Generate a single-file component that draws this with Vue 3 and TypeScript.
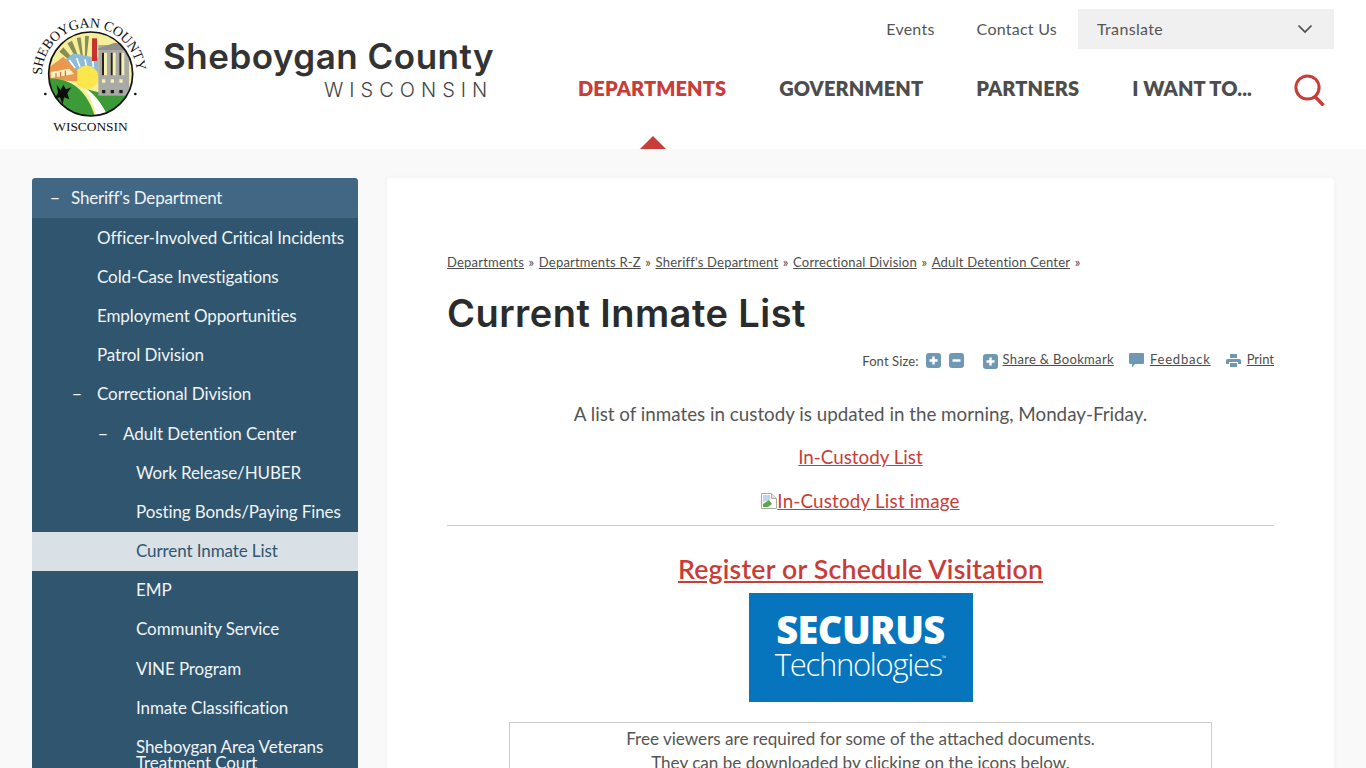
<script setup lang="ts">
const topLinks = ["Events", "Contact Us"];
const mainNav = ["Departments", "Government", "Partners", "I Want To..."];
const crumbs = [
  "Departments",
  "Departments R-Z",
  "Sheriff's Department",
  "Correctional Division",
  "Adult Detention Center",
];
const sideItems = [
  { label: "Officer-Involved Critical Incidents", level: 1 },
  { label: "Cold-Case Investigations", level: 1 },
  { label: "Employment Opportunities", level: 1 },
  { label: "Patrol Division", level: 1 },
  { label: "Correctional Division", level: 1, open: true },
  { label: "Adult Detention Center", level: 2, open: true },
  { label: "Work Release/HUBER", level: 3 },
  { label: "Posting Bonds/Paying Fines", level: 3 },
  { label: "Current Inmate List", level: 3, current: true },
  { label: "EMP", level: 3 },
  { label: "Community Service", level: 3 },
  { label: "VINE Program", level: 3 },
  { label: "Inmate Classification", level: 3 },
  { label: "Sheboygan Area Veterans Treatment Court", level: 3 },
];
</script>

<template>
  <div class="page">
    <header class="header">
      <a class="brand" href="#">
        <svg class="seal" width="116" height="124" viewBox="0 0 116 124">
          <defs>
            <path id="arc" d="M10 65 A47.5 47.5 0 0 1 105 65" />
            <clipPath id="disc"><circle cx="182" cy="192" r="126" /></clipPath>
          </defs>
          <text class="seal-arc"><textPath href="#arc" textLength="145" lengthAdjust="spacing">SHEBOYGAN COUNTY</textPath></text>
          <g transform="translate(-2 0) scale(.3333)">
            <g clip-path="url(#disc)">
              <rect x="50" y="60" width="270" height="270" fill="#f6ef9a" />
              <path d="M165 190 L88 125 L100 112 Z M165 190 L112 100 L126 92 Z M165 190 L140 84 L152 82 Z M165 190 L165 78 L177 78 Z" fill="#8b8d58" />
              <path d="M105 150 L130 130 L205 145 V200 H140 Z" fill="#8dbcd9" />
              <path d="M118 150 L135 175 M140 145 L150 172 M165 148 L170 172 M188 148 L190 172" stroke="#fff" stroke-width="5" />
              <rect x="186" y="85" width="15" height="68" fill="#c8312c" />
              <circle cx="170" cy="202" r="35" fill="#fbe64c" />
              <path d="M52 176 L100 140 L142 184 V214 L52 210 Z" fill="#e8994d" />
              <path d="M62 186 L118 176 L132 192 L64 204 Z" fill="#f8ecc0" />
              <path d="M78 190 V202 M92 186 V200 M106 182 V198" stroke="#a8632a" stroke-width="3" />
              <path d="M50 205 C110 205 165 225 195 320 L50 330 Z" fill="#3c9b37" />
              <path d="M172 238 C195 245 205 250 290 252 L320 240 V330 L228 315 C215 280 195 255 172 238 Z" fill="#3c9b37" />
              <path d="M160 234 C190 250 215 280 232 315 L200 325 C195 290 180 255 160 234 Z" fill="#fff" />
              <path d="M80 225 L92 240 L100 225 L108 238 L124 232 L112 250 L118 268 L102 262 L98 284 L90 262 L74 266 L84 248 Z" fill="#0d0d0d" />
              <rect x="205" y="105" width="92" height="152" fill="#a9aaa5" />
              <path d="M205 115 L255 98 L297 110 V120 H205 Z" fill="#8f908b" />
              <path d="M216 128 H231 V196 H216 Z M242 128 H257 V196 H242 Z M268 128 H283 V196 H268 Z" fill="#f6efb0" />
              <path d="M216 128 H222 V196 H216 Z M242 128 H248 V196 H242 Z M268 128 H274 V196 H268 Z" fill="#232323" />
              <path d="M216 208 H226 V218 H216 Z M242 208 H252 V218 H242 Z M268 208 H278 V218 H268 Z" fill="#f6efb0" />
              <path d="M216 240 H226 V250 H216 Z M242 240 H252 V250 H242 Z M268 240 H278 V250 H268 Z" fill="#1c1c1c" />
            </g>
            <circle cx="182" cy="192" r="126" fill="none" stroke="#111" stroke-width="5" />
            <circle cx="46" cy="252" r="4" fill="#111" />
            <circle cx="316" cy="252" r="4" fill="#111" />
          </g>
          <text class="seal-bottom" x="58.5" y="120.5" text-anchor="middle">WISCONSIN</text>
        </svg>
        <span class="brand-text">
          <span class="brand-name">Sheboygan County</span>
          <span class="brand-state">WISCONSIN</span>
        </span>
      </a>
      <div class="nav-area">
        <div class="top-row">
          <a v-for="link in topLinks" :key="link" class="top-link" href="#">{{ link }}</a>
          <div class="translate">
            <span class="translate-label">Translate</span>
            <svg width="16" height="10" viewBox="0 0 16 10"><path d="M1.5 1.5 L8 8 L14.5 1.5" fill="none" stroke="#4c4c4c" stroke-width="1.7" /></svg>
          </div>
        </div>
        <nav class="main-row">
          <a
            v-for="(item, i) in mainNav"
            :key="item"
            class="main-link"
            :class="{ active: i === 0 }"
            href="#"
          >{{ item }}</a>
          <svg class="search" width="32" height="32" viewBox="0 0 32 32">
            <circle cx="13.5" cy="13.5" r="11.6" fill="none" stroke="#c93c37" stroke-width="3" />
            <path d="M20.5 22 L29.5 31.5" fill="none" stroke="#c93c37" stroke-width="3.4" />
          </svg>
        </nav>
      </div>
    </header>

    <main class="layout">
      <aside class="side">
        <div class="side-head"><span class="dash">−</span>Sheriff's Department</div>
        <a
          v-for="item in sideItems"
          :key="item.label"
          class="side-item"
          :class="['lvl' + item.level, { current: item.current }]"
          href="#"
        ><span v-if="item.open" class="dash">−</span><span>{{ item.label }}</span></a>
      </aside>

      <article class="card">
        <div class="crumbs">
          <template v-for="crumb in crumbs" :key="crumb">
            <a href="#">{{ crumb }}</a><span class="sep"> » </span>
          </template>
        </div>
        <h1>Current Inmate List</h1>
        <div class="tools">
          <span class="fs-label">Font Size:</span>
          <span class="tool-btn"><svg width="15" height="15" viewBox="0 0 15 15"><path d="M7.5 3.5 V11.5 M3.5 7.5 H11.5" stroke="#fff" stroke-width="2.4" /></svg></span>
          <span class="tool-btn minus"><svg width="15" height="15" viewBox="0 0 15 15"><path d="M3.5 7.5 H11.5" stroke="#fff" stroke-width="2.4" /></svg></span>
          <span class="tool-btn share"><svg width="15" height="15" viewBox="0 0 15 15"><path d="M7.5 3.5 V11.5 M3.5 7.5 H11.5" stroke="#fff" stroke-width="2.4" /></svg></span>
          <a href="#">Share &amp; Bookmark</a>
          <svg class="tool-icon fb" width="15" height="15" viewBox="0 0 15 15"><path d="M1 0 H14 Q15 0 15 1 V10 Q15 11 14 11 H6 L3 14.5 V11 H1 Q0 11 0 10 V1 Q0 0 1 0 Z" fill="#6f98b4" /></svg>
          <a class="feedback" href="#">Feedback</a>
          <svg class="tool-icon pr" width="15" height="15" viewBox="0 0 15 15"><path d="M4 1 H11 V5 H4 Z M1.5 6 H13.5 Q15 6 15 7.5 V11 H12 V9 H3 V11 H0 V7.5 Q0 6 1.5 6 Z M4 10 H11 V14 H4 Z" fill="#6f98b4" /></svg>
          <a href="#">Print</a>
        </div>

        <p class="lead first">A list of inmates in custody is updated in the morning, Monday-Friday.</p>
        <p class="lead"><a href="#">In-Custody List</a></p>
        <p class="lead image-line">
          <a href="#">
            <svg class="broken" width="16" height="16" viewBox="0 0 16 16">
              <path d="M.5 .5 H10.5 L15.5 5.5 V15.5 H.5 Z" fill="#fff" stroke="#a9a9a9" />
              <path d="M10.5 .5 V5.5 H15.5" fill="#e6e6e6" stroke="#a9a9a9" />
              <path d="M2 2 H9 V7 L2 9 Z" fill="#c3d4ee" />
              <path d="M2 14 L2 11 L8 7 L11 11 L7 14 Z" fill="#5fa64a" />
            </svg>In-Custody List image</a>
        </p>
        <hr />
        <h2><a href="#">Register or Schedule Visitation</a></h2>
        <div class="securus">
          <span class="sec-top">SECURUS</span>
          <span class="sec-bottom">Technologies<sup>™</sup></span>
        </div>
        <div class="viewers">
          Free viewers are required for some of the attached documents.<br />
          They can be downloaded by clicking on the icons below.
        </div>
      </article>
    </main>
  </div>
</template>

<style scoped>
.page {
  height: 768px;
  overflow: hidden;
  background: #f9f9f9;
  font-family: "Lato", "Open Sans", sans-serif;
  color: #4d4d4d;
}

a {
  color: inherit;
}

.header {
  height: 149px;
  background: #fff;
  display: flex;
  justify-content: space-between;
  padding: 0 32px;
  box-sizing: border-box;
}

.brand {
  display: flex;
  text-decoration: none;
  height: 149px;
}

.seal {
  margin-top: 10px;
  overflow: visible;
}

.seal-arc {
  font: 14px "Liberation Serif", serif;
  fill: #111;
}

.seal-bottom {
  font: 13.4px "Liberation Serif", serif;
  fill: #111;
}

.brand-text {
  display: flex;
  flex-direction: column;
  align-items: flex-end;
  margin-left: 15px;
  padding-top: 35px;
}

.brand-name {
  font: 600 35px/42px "Inter", sans-serif;
  letter-spacing: 0.5px;
  color: #333;
  white-space: nowrap;
}

.brand-state {
  font: 300 20px/26px "Inter", sans-serif;
  letter-spacing: 6px;
  color: #444;
  margin-right: 1px;
}

.nav-area {
  width: 756px;
}

.top-row {
  display: flex;
  justify-content: flex-end;
  align-items: center;
  margin-top: 9px;
  height: 40px;
}

.top-link {
  font-size: 16px;
  text-decoration: none;
  margin: 0 42px 2px 0;
  letter-spacing: 0.25px;
  color: #555;
}

.top-link:nth-child(2) {
  margin-right: 21px;
}

.translate {
  width: 256px;
  height: 40px;
  background: #f0f0f0;
  box-sizing: border-box;
  padding: 0 21px 0 19px;
  display: flex;
  align-items: center;
  justify-content: space-between;
  font-size: 16px;
  letter-spacing: 0.35px;
  color: #555;
}

.translate-label {
  margin-bottom: 2px;
}

.main-row {
  display: flex;
  align-items: center;
  height: 40px;
  margin-top: 19px;
}

.main-link {
  font: 800 20px/40px "Lato", sans-serif;
  text-transform: uppercase;
  text-decoration: none;
  color: #4d4d4d;
  margin-right: 53px;
  position: relative;
  white-space: nowrap;
  letter-spacing: 0.1px;
}

.main-link.active {
  color: #c93c37;
}

.main-link.active::after {
  content: "";
  position: absolute;
  left: 50%;
  margin-left: -12px;
  top: 68px;
  border: 13px solid transparent;
  border-top: 0;
  border-bottom: 13px solid #c93c37;
}

.search {
  margin: 4px 0 0 -11px;
}

.layout {
  display: flex;
  gap: 29px;
  padding: 29px 32px 0;
  align-items: flex-start;
}

.side {
  width: 326px;
  flex: none;
  background: #30556f;
  border-radius: 4px 4px 0 0;
  color: #f0f4f5;
  font-size: 17px;
  letter-spacing: -0.1px;
  overflow: hidden;
}

.side-head {
  height: 40px;
  line-height: 39px;
  background: #426784;
  padding-left: 18px;
  letter-spacing: -0.2px;
}

.side-item {
  display: flex;
  align-items: flex-start;
  text-decoration: none;
  line-height: 16px;
  box-sizing: border-box;
  padding: 11.6px 8px 11.6px 0;
}

.dash {
  display: inline-block;
  flex: none;
}

.side-head .dash {
  width: 21px;
}

.lvl1 {
  padding-left: 65px;
}

.lvl1 .dash {
  margin-left: -25px;
  width: 25px;
}

.lvl2 {
  padding-left: 66px;
}

.lvl2 .dash {
  width: 25px;
}

.lvl3 {
  padding-left: 104px;
}

.current {
  background: #d9e1e7;
  color: #30556f;
}

.card {
  width: 947px;
  flex: none;
  min-height: 700px;
  background: #fff;
  border-radius: 4px;
  padding: 75px 60px 0;
  box-sizing: border-box;
  box-shadow: 0 0 6px rgba(0, 0, 0, 0.04);
}

.crumbs {
  font-size: 13px;
  line-height: 18px;
  letter-spacing: 0.2px;
}

.sep {
  white-space: pre;
  margin: 0 1px;
}

h1 {
  font: 600 38px/46px "Inter", sans-serif;
  letter-spacing: 0.45px;
  color: #2b2b2b;
  margin: 19px 0 0;
}

.tools {
  display: flex;
  justify-content: flex-end;
  align-items: center;
  font-size: 13px;
  height: 20px;
  margin-top: 14px;
}

.tools a {
  letter-spacing: 0.33px;
  position: relative;
  top: -1px;
}

.tools a:last-child {
  letter-spacing: 0;
}

.tools a.feedback {
  letter-spacing: 0.8px;
}

.fs-label {
  margin-right: 7px;
  letter-spacing: 0.1px;
  position: relative;
  top: 1px;
}

.tool-btn {
  width: 15px;
  height: 15px;
  background: #6f98b4;
  border-radius: 3px;
  margin-right: 8px;
  display: block;
  position: relative;
}

.tool-btn svg {
  display: block;
}

.tool-btn.minus {
  margin-right: 19px;
}

.tool-btn.share {
  margin-right: 5px;
  top: 1px;
}

.tool-icon {
  margin-right: 6px;
}

.fb {
  margin-left: 15px;
}

.pr {
  margin-left: 15px;
}

.lead {
  text-align: center;
  font-size: 18.8px;
  line-height: 24px;
  margin: 19px 0 0;
  color: #555;
}

.lead.first {
  margin-top: 32px;
}

.lead.image-line {
  margin-top: 20px;
  letter-spacing: 0.2px;
}

.lead a,
h2 a {
  color: #c93c37;
}

.broken {
  vertical-align: -1px;
}

hr {
  border: 0;
  border-top: 1px solid #ccc;
  margin: 12px 0 0;
}

h2 {
  font: 600 26.7px/32px "Lato", sans-serif;
  text-align: center;
  margin: 27px 0 0;
  letter-spacing: 0.2px;
}

.securus {
  width: 224px;
  height: 109px;
  margin: 8px auto 0;
  background: #0675bd;
  color: #fff;
  display: flex;
  flex-direction: column;
  align-items: center;
  padding-top: 17px;
  box-sizing: border-box;
}

.sec-top {
  font: 900 38px/38px "Open Sans", sans-serif;
  letter-spacing: -0.6px;
}

.sec-bottom {
  font: 300 31px/25px "Open Sans", sans-serif;
  letter-spacing: -1.3px;
  margin-top: 3.5px;
}

.sec-bottom sup {
  font-size: 6px;
  line-height: 0;
  vertical-align: 16px;
  letter-spacing: 0;
}

.viewers {
  width: 703px;
  box-sizing: border-box;
  margin: 20px auto 0;
  border: 1px solid #ccc;
  text-align: center;
  font-size: 17.1px;
  line-height: 23.5px;
  padding: 4px 0 20px;
  color: #555;
}
</style>

<style>
html,
body {
  margin: 0;
  background: #f9f9f9;
}
</style>
